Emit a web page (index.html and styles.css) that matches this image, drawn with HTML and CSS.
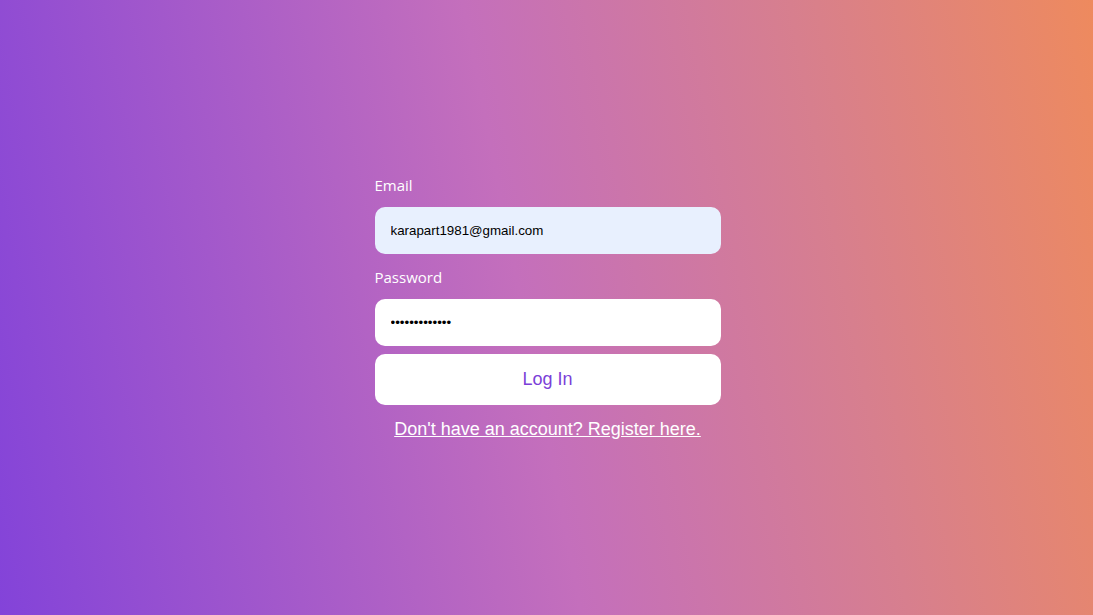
FILE: index.html
```html
<!DOCTYPE html>
<html lang="en">
<head>
<meta charset="utf-8">
<title>Log In</title>
<link rel="stylesheet" href="styles.css">
</head>
<body>
<main class="page">
  <form class="login">
    <label class="label" for="email">Email</label>
    <input class="field field-autofill" id="email" type="email" value="karapart1981@gmail.com">
    <label class="label label-password" for="password">Password</label>
    <input class="field" id="password" type="password" value="1234567890123">
    <button class="btn" type="button">Log In</button>
    <a class="register" href="#">Don't have an account? Register here.</a>
  </form>
</main>
</body>
</html>
```

FILE: styles.css
```css
* { box-sizing: border-box; }
html, body { margin: 0; height: 100%; }
body {
  background: linear-gradient(79deg, #8343d9 0%, #c46fbc 48%, #d77f8e 75%, #ee8a5e 100%);
  font-family: "Open Sans", "Noto Sans", sans-serif;
}
.page {
  height: 615px;
  display: flex;
  align-items: center;
  justify-content: center;
  padding-left: 2px;
}
.login {
  width: 346px;
  display: flex;
  flex-direction: column;
}
.label {
  color: #fff;
  font-size: 15px;
  line-height: 20px;
  margin-bottom: 12px;
}
.label-password { margin-top: 13px; }
.field {
  height: 47px;
  border: none;
  border-radius: 10px;
  background: #fff;
  padding: 0 16px;
  font-family: "Liberation Sans", Arial, sans-serif;
  font-size: 13.33px;
  color: #000;
  outline: none;
}
.field-autofill { background: #e8f0fe; }
.btn {
  margin-top: 8px;
  height: 51px;
  border: none;
  border-radius: 10px;
  background: #fff;
  color: #7b3fd8;
  font-family: "Liberation Sans", Arial, sans-serif;
  font-size: 18px;
}
.register {
  margin-top: 14px;
  color: #fff;
  text-align: center;
  font-family: "Liberation Sans", Arial, sans-serif;
  font-size: 18px;
  line-height: 21px;
}
```
